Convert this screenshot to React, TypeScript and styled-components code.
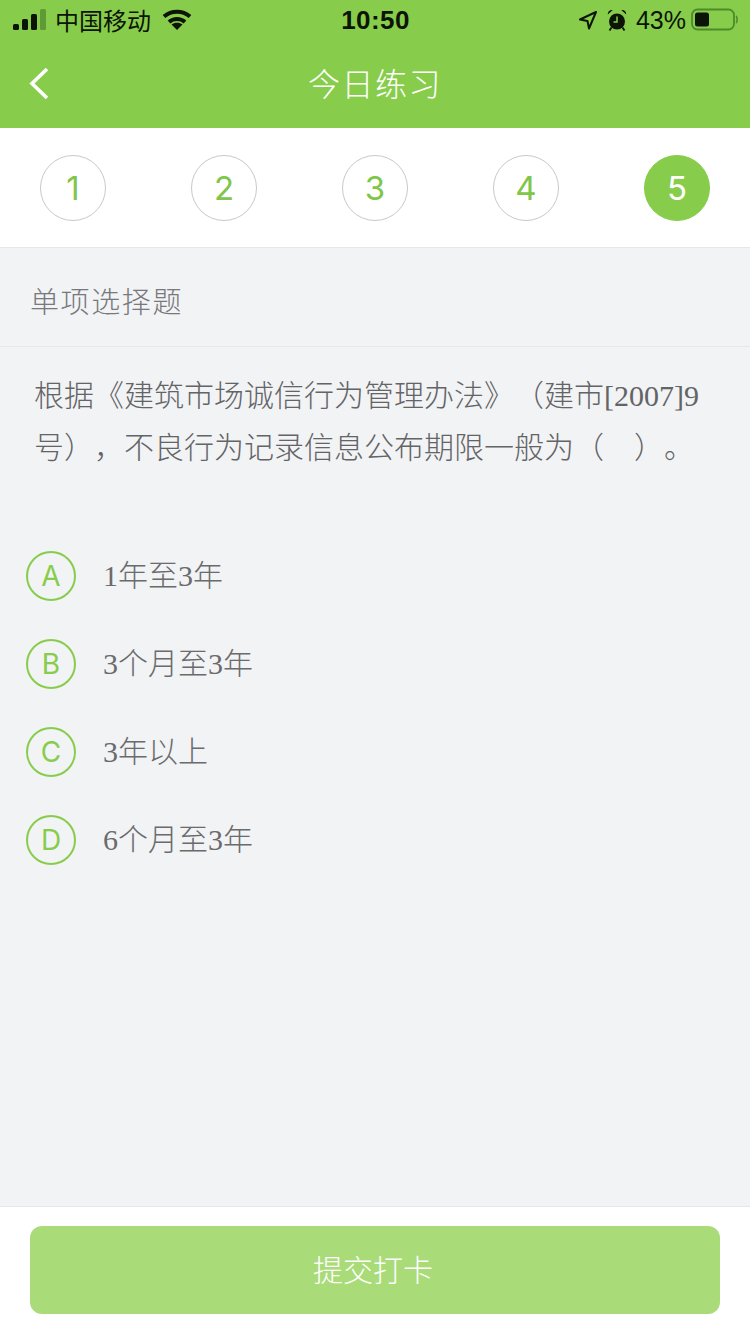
import React from "react";
import styled, { createGlobalStyle } from "styled-components";

const GlobalStyle = createGlobalStyle`
    html, body {
        margin: 0;
        padding: 0;
        background: #f2f3f5;
    }
    * {
        box-sizing: border-box;
    }
`;

const SANS = `"Noto Sans CJK SC", sans-serif`;
const MIXED = `"Liberation Serif", "Noto Sans CJK SC", serif`;
const LATIN = `"Liberation Sans", "Noto Sans CJK SC", sans-serif`;
const LIGHT = `Inter, "Liberation Sans", sans-serif`;

const Page = styled.div`
    width: 750px;
    height: 1334px;
    display: flex;
    flex-direction: column;
    background: #f2f3f5;
    overflow: hidden;
`;

const Header = styled.header`
    height: 128px;
    flex: none;
    background: #87cd4b;
    display: flex;
    flex-direction: column;
`;

const StatusBar = styled.div`
    height: 40px;
    padding: 0 12px 0 13px;
    display: grid;
    grid-template-columns: 1fr auto 1fr;
    align-items: center;
    color: #0c1406;
`;

const StatusLeft = styled.div`
    display: flex;
    align-items: center;
`;

const StatusRight = styled.div`
    display: flex;
    align-items: center;
    justify-content: flex-end;
`;

const Carrier = styled.span`
    font: 400 24px/40px ${SANS};
    margin: 0 11px 0 8px;
`;

const Time = styled.span`
    font: 700 26px/40px ${LATIN};
    letter-spacing: 0.4px;
`;

const AlarmSlot = styled.span`
    display: flex;
    margin-left: 9px;
`;

const Percent = styled.span`
    font: 400 25px/40px ${LATIN};
    margin: 0 5px 0 9px;
`;

const NavBar = styled.div`
    height: 88px;
    display: flex;
    align-items: center;
    justify-content: center;
    position: relative;
`;

const BackIcon = styled.svg`
    position: absolute;
    left: 28px;
    top: 26px;
`;

const Title = styled.h1`
    margin: 0 0 4px;
    font: 300 32px/84px ${SANS};
    letter-spacing: 1.5px;
    color: #fff;
`;

const Steps = styled.nav`
    height: 120px;
    flex: none;
    padding: 0 40px;
    background: #fff;
    border-bottom: 1px solid #e6e7e9;
    display: flex;
    align-items: center;
    justify-content: space-between;
`;

const Step = styled.div<{ $active?: boolean }>`
    width: 66px;
    height: 66px;
    border-radius: 50%;
    border: 1px solid ${(p) => (p.$active ? "#87cd4b" : "#c9c9c9")};
    background: ${(p) => (p.$active ? "#87cd4b" : "#fff")};
    color: ${(p) => (p.$active ? "#fff" : "#7fc64a")};
    font: 400 33px/64px ${LIGHT};
    text-align: center;
`;

const Main = styled.main`
    flex: 1;
    display: flex;
    flex-direction: column;
`;

const SectionLabel = styled.div`
    height: 99px;
    padding: 6px 30px 0;
    border-bottom: 1px solid #e6e7e9;
    display: flex;
    align-items: center;
    font: 300 29px/1 ${SANS};
    letter-spacing: 1.6px;
    color: #77797c;
`;

const Question = styled.p`
    margin: 0;
    padding: 23px 35px 0 34px;
    font: 300 30px/52px ${MIXED};
    text-spacing-trim: space-all;
    color: #636466;
`;

const Options = styled.ul`
    list-style: none;
    margin: 0;
    padding: 77px 0 0 26px;
    display: flex;
    flex-direction: column;
    gap: 38px;
`;

const Option = styled.li`
    display: flex;
    align-items: center;
    gap: 27px;
`;

const OptionMark = styled.span`
    width: 50px;
    height: 50px;
    flex: none;
    border-radius: 50%;
    border: 2px solid #87cd4b;
    color: #87cd4b;
    font: 400 28px/47px ${LIGHT};
    text-align: center;
`;

const OptionText = styled.span`
    font: 300 30px/46px ${MIXED};
    color: #6a6b6d;
    margin-top: -1px;
`;

const Footer = styled.footer`
    height: 128px;
    flex: none;
    padding: 19px 30px 0;
    background: #fff;
    border-top: 1px solid #e6e7ea;
`;

const SubmitButton = styled.button`
    display: block;
    width: 690px;
    height: 88px;
    padding: 0 4px 4px 0;
    border: 0;
    border-radius: 12px;
    background: #a9dc78;
    color: #fff;
    font: 300 30px/84px ${SANS};
`;

function SignalIcon() {
    return (
        <svg width="34" height="22" viewBox="0 0 34 22" fill="#0c1406">
            <rect x="0" y="15" width="6" height="6" rx="1.5" />
            <rect x="9" y="10" width="6" height="11" rx="1.5" />
            <rect x="18" y="5" width="6" height="16" rx="1.5" />
            <rect x="27" y="0" width="6" height="21" rx="1.5" fill="#5f9a37" />
        </svg>
    );
}

function WifiIcon() {
    return (
        <svg width="30" height="22" viewBox="0 0 30 22" fill="none" stroke="#0c1406" strokeWidth="4">
            <path d="M2 7.500C9.500 1 20.500 1 28 7.500" />
            <path d="M7 13C11.500 9 18.500 9 23 13" />
            <path d="M9.500 15.500C12.500 13.300 17.500 13.300 20.500 15.500L15 21z" fill="#0c1406" stroke="none" />
        </svg>
    );
}

function LocationIcon() {
    return (
        <svg width="20" height="20" viewBox="0 0 20 20" fill="none" stroke="#0c1406" strokeWidth="2" strokeLinejoin="round">
            <path d="M18 2 2 9.500l7.500 1.500 1.500 7.500z" />
        </svg>
    );
}

function AlarmIcon() {
    return (
        <svg width="20" height="22" viewBox="0 0 20 22" fill="#0c1406">
            <circle cx="10" cy="12.500" r="8" />
            <path d="M.8 5.500C.6 2.500 2.800.5 5.800 1zM19.200 5.500c.2-3-2-5-5-4.500z" />
            <path d="M4.500 18.500 2.500 21.500M15.500 18.500l2 3" stroke="#0c1406" strokeWidth="1.800" />
            <path d="M10 7.500V13H6.500" fill="none" stroke="#87cd4b" strokeWidth="1.500" />
        </svg>
    );
}

function BatteryIcon() {
    return (
        <svg width="47" height="24" viewBox="0 0 47 24" fill="none">
            <rect x="1" y="1.500" width="42" height="20" rx="5.500" stroke="#4f8a2a" strokeWidth="1.800" />
            <rect x="4" y="4.500" width="14" height="14" rx="2.500" fill="#0c1406" />
            <path d="M45 8c1.500.8 1.500 6.200 0 7" stroke="#4f8a2a" strokeWidth="1.600" />
        </svg>
    );
}

const steps = [1, 2, 3, 4, 5];

const options = [
    { mark: "A", text: "1年至3年" },
    { mark: "B", text: "3个月至3年" },
    { mark: "C", text: "3年以上" },
    { mark: "D", text: "6个月至3年" },
];

export default function App() {
    return (
        <Page>
            <GlobalStyle />
            <Header>
                <StatusBar>
                    <StatusLeft>
                        <SignalIcon />
                        <Carrier>中国移动</Carrier>
                        <WifiIcon />
                    </StatusLeft>
                    <Time>10:50</Time>
                    <StatusRight>
                        <LocationIcon />
                        <AlarmSlot>
                            <AlarmIcon />
                        </AlarmSlot>
                        <Percent>43%</Percent>
                        <BatteryIcon />
                    </StatusRight>
                </StatusBar>
                <NavBar>
                    <BackIcon width="24" height="36" viewBox="0 0 24 36" fill="none" stroke="#fff" strokeWidth="3.600">
                        <path d="M19 3 4 17.500 19 32" />
                    </BackIcon>
                    <Title>今日练习</Title>
                </NavBar>
            </Header>
            <Steps>
                {steps.map((n) => (
                    <Step key={n} $active={n === 5}>{n}</Step>
                ))}
            </Steps>
            <Main>
                <SectionLabel>单项选择题</SectionLabel>
                <Question>根据《建筑市场诚信行为管理办法》（建市[2007]9号），不良行为记录信息公布期限一般为（　）。</Question>
                <Options>
                    {options.map((o) => (
                        <Option key={o.mark}>
                            <OptionMark>{o.mark}</OptionMark>
                            <OptionText>{o.text}</OptionText>
                        </Option>
                    ))}
                </Options>
            </Main>
            <Footer>
                <SubmitButton>提交打卡</SubmitButton>
            </Footer>
        </Page>
    );
}
